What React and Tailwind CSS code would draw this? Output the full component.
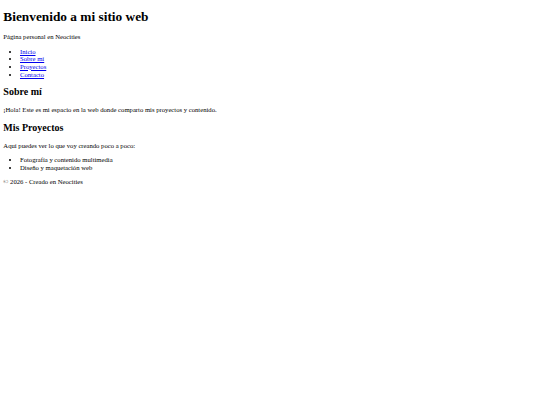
import React from "react";

const links = ["Inicio", "Sobre mí", "Proyectos", "Contacto"];

const App = () => {
  return (
    <div className="min-h-[405px] bg-white px-[3.33px] text-black font-['Liberation_Serif',serif] text-[6.67px] leading-[7.67px]">
      <h1 className="mt-[8.93px] mb-[8.93px] text-[13.33px] leading-[15.33px] font-bold">
        Bienvenido a mi sitio web
      </h1>
      <p className="my-[6.67px]">Página personal en Neocities</p>
      <nav>
        <ul className="my-[6.67px] pl-[16.67px] list-disc">
          {links.map((l) => (
            <li key={l}>
              <a href="#" className="text-[#0000ee] underline">
                {l}
              </a>
            </li>
          ))}
        </ul>
      </nav>
      <h2 className="my-[8.3px] text-[10px] leading-[11.5px] font-bold">Sobre mí</h2>
      <p className="my-[6.67px]">
        ¡Hola! Este es mi espacio en la web donde comparto mis proyectos y contenido.
      </p>
      <h2 className="my-[8.3px] text-[10px] leading-[11.5px] font-bold">Mis Proyectos</h2>
      <p className="my-[6.67px]">Aquí puedes ver lo que voy creando poco a poco:</p>
      <ul className="my-[6.67px] pl-[16.67px] list-disc">
        <li>Fotografía y contenido multimedia</li>
        <li>Diseño y maquetación web</li>
      </ul>
      <p className="my-[6.67px]">© 2026 - Creado en Neocities</p>
    </div>
  );
};

export default App;
